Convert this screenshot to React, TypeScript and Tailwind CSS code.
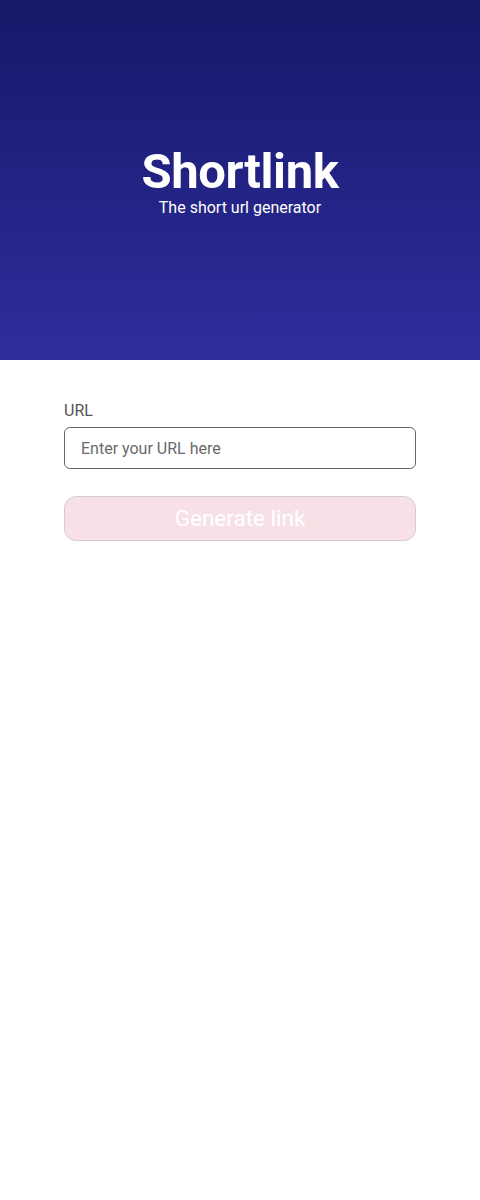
export default function App() {
  return (
    <div className="min-h-[1200px] bg-white font-['Roboto',sans-serif]">
      {/* Hero */}
      <header className="flex h-[360px] flex-col items-center justify-center bg-gradient-to-b from-[#161868] to-[#2e2e9f] pt-[4px] text-white">
        <h1 className="text-[49px] font-bold leading-[52px] tracking-[-0.4px]">Shortlink</h1>
        <p className="text-[16px] leading-[20px]">The short url generator</p>
      </header>

      {/* Form */}
      <main className="px-16 pt-[41px]">
        <label htmlFor="url" className="block text-[16px] leading-[20px] text-[#555]">
          URL
        </label>
        <input
          id="url"
          type="text"
          placeholder="Enter your URL here"
          className="mt-[6px] h-[42px] w-full rounded-[6px] border border-[#666] px-4 text-[16px] text-[#333] outline-none placeholder:text-[#6a6a6a]"
        />
        <button
          disabled
          className="mt-[27px] h-[45px] w-full rounded-[12px] border border-[#d4cccd] bg-[#f8e1e6] text-[22.5px] text-white"
        >
          Generate link
        </button>
      </main>
    </div>
  )
}
